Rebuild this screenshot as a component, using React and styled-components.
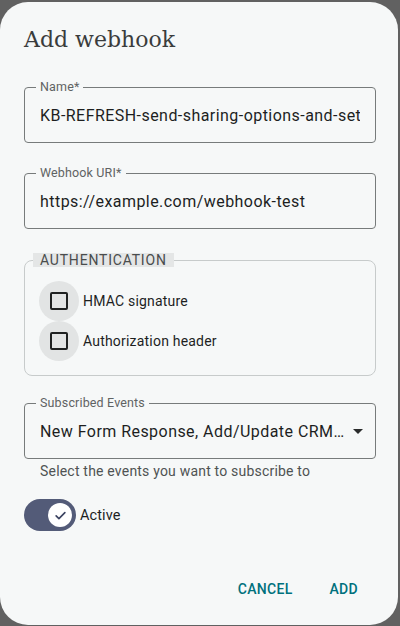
import React from 'react';
import styled, { createGlobalStyle } from 'styled-components';

const GlobalStyle = createGlobalStyle`
  html, body {
    margin: 0;
    padding: 0;
    background: #616161;
    font-family: Roboto, "Noto Sans", sans-serif;
  }
  * { box-sizing: border-box; }
`;

const Backdrop = styled.div`
  width: 400px;
  height: 626px;
  padding: 2px 2px 1px 0;
  overflow: hidden;
`;

const Dialog = styled.div`
  height: 100%;
  background: #f6f8f8;
  border-radius: 28px;
  display: flex;
  flex-direction: column;
  padding: 0 22px 0 24px;
`;

const Title = styled.h2`
  margin: 0;
  padding: 24px 0 0;
  font-family: "DejaVu Serif", "Liberation Serif", serif;
  font-weight: 300;
  font-size: 22px;
  line-height: 28px;
  color: #3a3c3c;
`;

const Form = styled.div`
  display: flex;
  flex-direction: column;
  padding-top: 27px;
`;

const Outlined = styled.fieldset`
  margin: 0 0 24px;
  padding: 0 15px;
  min-width: 0;
  border: 1px solid #777b7b;
  border-radius: 4px;
  height: 62px;
`;

const FloatLabel = styled.legend`
  padding: 0 4px;
  margin-left: -4px;
  font-size: 12.5px;
  line-height: 12px;
  letter-spacing: 0.15px;
  color: #5f6363;
`;

const Value = styled.div`
  display: flex;
  align-items: center;
  height: 24px;
  margin-top: 10px;
  margin-right: ${p => (p.$select ? -3 : 0)}px;
  font-size: 16px;
  color: #1d1f1f;
  letter-spacing: 0.45px;
  white-space: nowrap;
`;

// the text part of an input; long values are cut at the padding edge
const ValueText = styled.span`
  flex: 1;
  min-width: 0;
  overflow: hidden;
  text-overflow: ${p => (p.$ellipsis ? 'ellipsis' : 'clip')};
`;

const Arrow = styled.span`
  width: 0;
  height: 0;
  margin: 0 0 0 6px;
  border-left: 5px solid transparent;
  border-right: 5px solid transparent;
  border-top: 5px solid #2a2c2c;
`;

const Group = styled.fieldset`
  margin: 0 0 21px;
  padding: 14px 0 14px 8px;
  min-width: 0;
  border: 1px solid #c7cbcb;
  border-radius: 8px;
`;

const GroupTitle = styled.legend`
  padding: 0 7px;
  background: #e4e6e6;
  font-size: 14px;
  line-height: 14px;
  letter-spacing: 0.8px;
  color: #4a4d4d;
  text-transform: uppercase;
`;

const CheckRow = styled.label`
  display: flex;
  align-items: center;
  height: 40px;
  margin-left: 6px;
  font-size: 14px;
  letter-spacing: 0.2px;
  color: #1d1f1f;
`;

const CheckHalo = styled.span`
  display: flex;
  align-items: center;
  justify-content: center;
  width: 40px;
  height: 40px;
  border-radius: 50%;
  background: #e2e4e4;
  margin-right: 4px;
`;

const CheckBox = styled.span`
  width: 18px;
  height: 18px;
  border: 2px solid #1f2121;
  border-radius: 2px;
`;

const Helper = styled.div`
  margin: -22px 0 0 16px;
  font-size: 14px;
  line-height: 20px;
  letter-spacing: 0.2px;
  color: #4f5353;
`;

const SwitchRow = styled.label`
  display: flex;
  align-items: center;
  gap: 4px;
  margin-top: 18px;
  font-size: 14.5px;
  letter-spacing: 0.1px;
  color: #1d1f1f;
`;

const Track = styled.span`
  display: flex;
  align-items: center;
  justify-content: flex-end;
  width: 52px;
  height: 32px;
  padding-right: 4px;
  border-radius: 16px;
  background: ${p => (p.$on ? '#535b78' : '#c4c7c7')};
`;

const Thumb = styled.span`
  display: flex;
  align-items: center;
  justify-content: center;
  width: 24px;
  height: 24px;
  border-radius: 50%;
  background: #ffffff;
`;

const Actions = styled.div`
  margin-top: auto;
  display: flex;
  justify-content: flex-end;
  gap: 13px;
  padding: 0 6px 18px 0;
`;

const TextButton = styled.button`
  border: none;
  background: none;
  padding: 10px 12px;
  font-family: Roboto, sans-serif;
  font-size: 14px;
  font-weight: 500;
  letter-spacing: 0.3px;
  color: #00717d;
  text-transform: uppercase;
  cursor: pointer;
`;

const Check = () => (
  <svg width="15" height="15" viewBox="0 0 24 24">
    <path d="M5 12.5l4.5 4.5L19 7.5" fill="none" stroke="#3a4260" strokeWidth="2.6" strokeLinecap="round" strokeLinejoin="round" />
  </svg>
);

const auth = ['HMAC signature', 'Authorization header'];

export default function App() {
  return (
    <>
      <GlobalStyle />
      <Backdrop>
        <Dialog>
          <Title>Add webhook</Title>
          <Form>
            <Outlined>
              <FloatLabel>Name*</FloatLabel>
              <Value>
                <ValueText>KB-REFRESH-send-sharing-options-and-settings</ValueText>
              </Value>
            </Outlined>
            <Outlined>
              <FloatLabel>Webhook URI*</FloatLabel>
              <Value>
                <ValueText>https://example.com/webhook-test</ValueText>
              </Value>
            </Outlined>
            <Group>
              <GroupTitle>Authentication</GroupTitle>
              {auth.map(a => (
                <CheckRow key={a}>
                  <CheckHalo><CheckBox /></CheckHalo>
                  {a}
                </CheckRow>
              ))}
            </Group>
            <Outlined>
              <FloatLabel>Subscribed Events</FloatLabel>
              <Value $select>
                <ValueText $ellipsis>New Form Response, Add/Update CRM Contact, Task Completed</ValueText>
                <Arrow />
              </Value>
            </Outlined>
            <Helper>Select the events you want to subscribe to</Helper>
            <SwitchRow>
              <Track $on>
                <Thumb><Check /></Thumb>
              </Track>
              Active
            </SwitchRow>
          </Form>
          <Actions>
            <TextButton>Cancel</TextButton>
            <TextButton>Add</TextButton>
          </Actions>
        </Dialog>
      </Backdrop>
    </>
  );
}
